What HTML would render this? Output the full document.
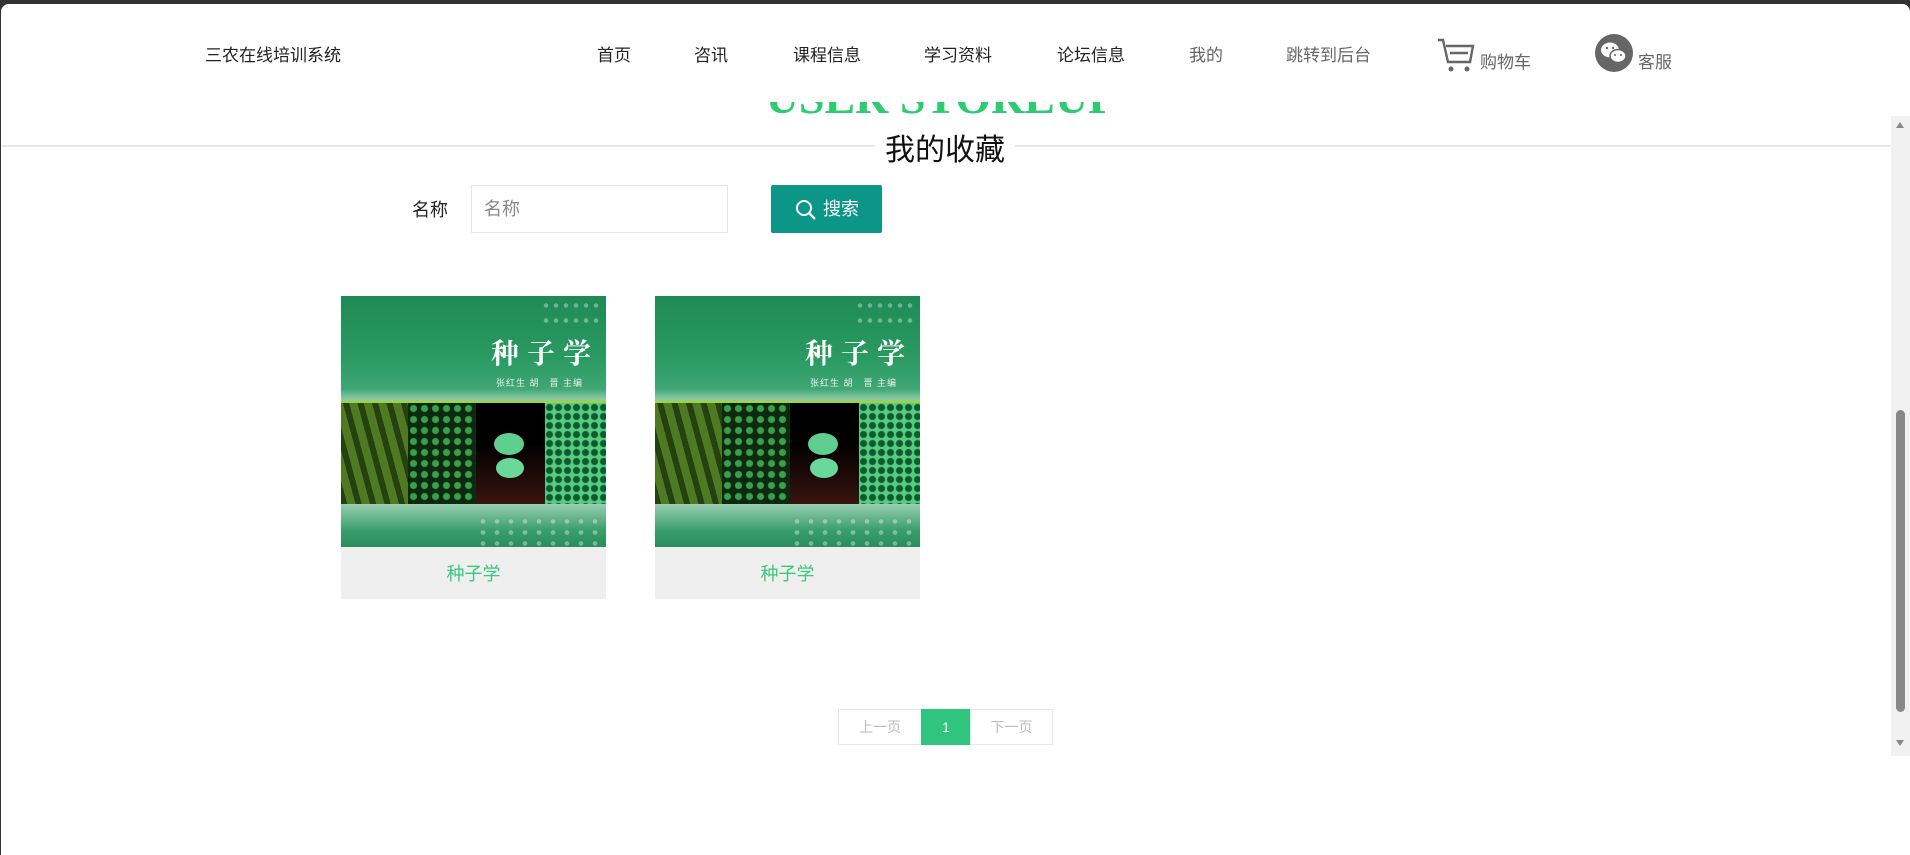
<!DOCTYPE html>
<html><head><meta charset="utf-8"><style>
*{margin:0;padding:0;box-sizing:border-box}
body{width:1910px;height:855px;overflow:hidden;background:#333;font-family:"Liberation Sans","Noto Sans CJK SC",sans-serif;position:relative}
.page{position:absolute;left:1px;top:4px;width:1909px;height:851px;background:#fff;border-radius:8px 8px 0 0;overflow:hidden}
.abs{position:absolute;white-space:nowrap}
.nav{font-size:17px;color:#222;top:37px}
.grey{color:#666}
.hline{position:absolute;left:0;top:141px;width:1890px;height:2px;background:#e8e8e8}
.card{position:absolute;top:292px;width:265px;height:303px}
.img{position:absolute;left:0;top:0;width:265px;height:251px;overflow:hidden;background:linear-gradient(180deg,#1f8a55 0%,#2a9a62 25%,#3fa775 37%,#8cc9a7 41%,#9dd14d 42%,#a6d94a 44%)}
.cap{position:absolute;left:0;top:251px;width:265px;height:52px;background:#efefef;color:#3cc77e;font-size:18px;text-align:center;line-height:54px}
.band{position:absolute;top:107px;height:101px}
.bot{position:absolute;left:0;top:208px;width:265px;height:43px;background:linear-gradient(180deg,#98ceb0,#3b9f6d 60%,#2a8e5c)}
.t{position:absolute;left:150px;top:36px;font-family:"Noto Serif CJK SC",serif;font-weight:bold;color:#fff;font-size:28px;letter-spacing:8px}
.s{position:absolute;left:155px;top:80px;color:#eee;font-size:9px;letter-spacing:1px}
.dots{position:absolute;background-image:radial-gradient(circle,rgba(255,255,255,.35) 2px,transparent 2.5px);background-size:10px 15px}
.pg{position:absolute;top:705px;height:36px;border:1px solid #e6e6e6;font-size:14px;color:#bbb;text-align:center;line-height:34px}
</style></head><body>
<div class="page">
<div class="abs" style="left:740px;top:67px;width:400px;text-align:center;font-family:'Liberation Serif',serif;font-size:46px;color:#2ecc71;font-weight:bold">USER STOREUP</div>
<div class="abs" style="left:0;top:0;width:1909px;height:98px;background:#fff"></div>
<div class="abs nav" style="left:204px">三农在线培训系统</div>
<div class="abs nav" style="left:596px">首页</div>
<div class="abs nav" style="left:693px">咨讯</div>
<div class="abs nav" style="left:792px">课程信息</div>
<div class="abs nav" style="left:923px">学习资料</div>
<div class="abs nav" style="left:1056px">论坛信息</div>
<div class="abs nav grey" style="left:1188px">我的</div>
<div class="abs nav grey" style="left:1285px">跳转到后台</div>
<svg class="abs" style="left:1436px;top:33px" width="38" height="36" viewBox="0 0 38 36"><path d="M1 3h5l5 22h22l3-16H9" fill="none" stroke="#666" stroke-width="2.4"/><path d="M13 16h18" stroke="#666" stroke-width="2.4"/><circle cx="14" cy="32" r="2.5" fill="#666"/><circle cx="30" cy="32" r="2.5" fill="#666"/></svg>
<div class="abs nav grey" style="left:1479px;top:44px">购物车</div>
<svg class="abs" style="left:1594px;top:30px" width="38" height="38" viewBox="0 0 38 38"><circle cx="19" cy="19" r="19" fill="#666"/><ellipse cx="15" cy="16" rx="9" ry="7.5" fill="#fff"/><ellipse cx="23" cy="22" rx="8" ry="6.5" fill="#fff" stroke="#666" stroke-width="1.5"/><circle cx="12" cy="14" r="1.2" fill="#666"/><circle cx="18" cy="14" r="1.2" fill="#666"/><circle cx="20" cy="21" r="1" fill="#666"/><circle cx="26" cy="21" r="1" fill="#666"/></svg>
<div class="abs nav grey" style="left:1637px;top:44px">客服</div>
<div class="hline"></div>
<div class="abs" style="left:874px;top:121px;padding:0 10px;background:#fff;font-size:30px;color:#111">我的收藏</div>
<div class="abs" style="left:411px;top:192px;font-size:18px;color:#222">名称</div>
<div class="abs" style="left:470px;top:181px;width:257px;height:48px;border:1px solid #e6e6e6;font-size:18px;color:#888;line-height:46px;padding-left:12px">名称</div>
<div class="abs" style="left:770px;top:181px;width:111px;height:48px;background:#0b9688;border-radius:2px;color:#fff;font-size:18px;line-height:48px;padding-left:24px"><svg style="position:absolute;left:24px;top:14px" width="22" height="22" viewBox="0 0 22 22"><circle cx="9" cy="9" r="7" fill="none" stroke="#fff" stroke-width="2"/><path d="M14 14l6 6" stroke="#fff" stroke-width="2.4"/></svg><span style="margin-left:28px">搜索</span></div>

<div class="card" style="left:340px">
<div class="img"><div class="dots" style="left:200px;top:2px;width:62px;height:30px"></div>
<div class="t">种子学</div><div class="s">张红生 胡　晋 主编</div>
<div class="band" style="left:0;width:67px;background:repeating-linear-gradient(75deg,#24420f 0 6px,#4f7a23 6px 14px)"></div>
<div class="band" style="left:67px;width:68px;background:radial-gradient(circle,#3aa04a 3px,transparent 4px) 0 0/11px 11px,#0d2a10"></div>
<div class="band" style="left:135px;width:69px;background:linear-gradient(180deg,#000 40%,#3a1410)"><div style="position:absolute;left:18px;top:30px;width:30px;height:22px;border-radius:50%;background:#5fcf8f"></div><div style="position:absolute;left:20px;top:55px;width:28px;height:20px;border-radius:50%;background:#6ad89a"></div></div>
<div class="band" style="left:204px;width:61px;background:radial-gradient(circle,#0e5a2e 3px,transparent 4px) 0 0/9px 9px,#55cc80"></div>
<div class="bot"></div><div class="dots" style="left:135px;top:220px;width:128px;height:30px;background-size:14px 11px"></div></div>
<div class="cap">种子学</div></div>

<div class="card" style="left:654px">
<div class="img"><div class="dots" style="left:200px;top:2px;width:62px;height:30px"></div>
<div class="t">种子学</div><div class="s">张红生 胡　晋 主编</div>
<div class="band" style="left:0;width:67px;background:repeating-linear-gradient(75deg,#24420f 0 6px,#4f7a23 6px 14px)"></div>
<div class="band" style="left:67px;width:68px;background:radial-gradient(circle,#3aa04a 3px,transparent 4px) 0 0/11px 11px,#0d2a10"></div>
<div class="band" style="left:135px;width:69px;background:linear-gradient(180deg,#000 40%,#3a1410)"><div style="position:absolute;left:18px;top:30px;width:30px;height:22px;border-radius:50%;background:#5fcf8f"></div><div style="position:absolute;left:20px;top:55px;width:28px;height:20px;border-radius:50%;background:#6ad89a"></div></div>
<div class="band" style="left:204px;width:61px;background:radial-gradient(circle,#0e5a2e 3px,transparent 4px) 0 0/9px 9px,#55cc80"></div>
<div class="bot"></div><div class="dots" style="left:135px;top:220px;width:128px;height:30px;background-size:14px 11px"></div></div>
<div class="cap">种子学</div></div>

<div class="pg" style="left:837px;width:84px">上一页</div>
<div class="pg" style="left:920px;width:50px;background:#2fc57f;border-color:#2fc57f;color:#fff">1</div>
<div class="pg" style="left:969px;width:83px">下一页</div>

<div class="abs" style="left:1890px;top:112px;width:19px;height:640px;background:#f1f1f1"></div>
<div class="abs" style="left:1895px;top:406px;width:9px;height:302px;background:#888;border-radius:5px"></div>
<div class="abs" style="left:1895px;top:118px;width:0;height:0;border:4px solid transparent;border-bottom:6px solid #888;border-top:0"></div>
<div class="abs" style="left:1895px;top:736px;width:0;height:0;border:4px solid transparent;border-top:6px solid #888;border-bottom:0"></div>
</div>
</body></html>
